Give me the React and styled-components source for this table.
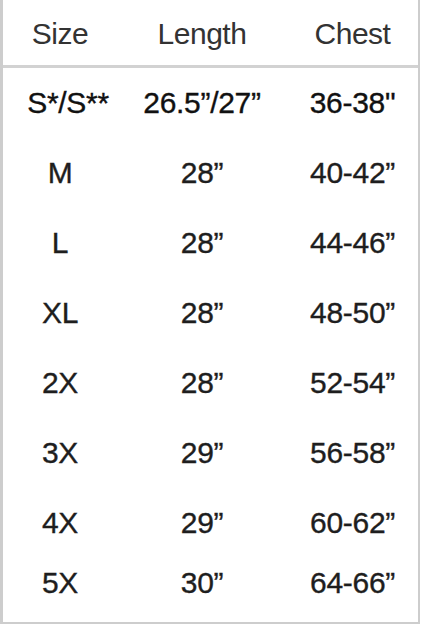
import React from "react";
import styled, { createGlobalStyle } from "styled-components";

const rows = [
  ["S*/S**", "26.5”/27”", "36-38\""],
  ["M", "28”", "40-42”"],
  ["L", "28”", "44-46”"],
  ["XL", "28”", "48-50”"],
  ["2X", "28”", "52-54”"],
  ["3X", "29”", "56-58”"],
  ["4X", "29”", "60-62”"],
  ["5X", "30”", "64-66”"],
];

const App = () => {
  return (
    <>
      <GlobalStyle />
      <Frame>
        <Header>
          <HeadCell>Size</HeadCell>
          <HeadCell>Length</HeadCell>
          <HeadCell>Chest</HeadCell>
        </Header>
        <Body>
          {rows.map((row, idx) => (
            <Row key={idx} $last={idx === rows.length - 1}>
              {row.map((cell, i) => (
                <Cell key={i} $first={idx === 0} $shift={idx === 0 && i === 0}>
                  {cell}
                </Cell>
              ))}
            </Row>
          ))}
        </Body>
      </Frame>
    </>
  );
};
export default App;

const GlobalStyle = createGlobalStyle`
  html, body {
    margin: 0;
    padding: 0;
    background: #ffffff;
  }
`;

const Frame = styled.div`
  width: 420px;
  height: 624px;
  box-sizing: border-box;
  border-left: 3px solid #cdcdcd;
  border-right: 2px solid #cdcdcd;
  border-bottom: 2px solid #cdcdcd;
  display: flex;
  flex-direction: column;
  font-family: "Liberation Sans", Arial, sans-serif;
`;

const Header = styled.div`
  display: grid;
  grid-template-columns: 114px 170px 1fr;
  height: 65px;
  border-bottom: 3px solid #d2d2d2;
  align-items: center;
`;

const HeadCell = styled.div`
  text-align: center;
  font-size: 30px;
  font-weight: 400;
  letter-spacing: -0.5px;
  color: #333333;
  padding-top: 3px;
`;

const Body = styled.div`
  display: flex;
  flex-direction: column;
`;

const Row = styled.div`
  display: grid;
  grid-template-columns: 114px 170px 1fr;
  height: ${(p) => (p.$last ? "50px" : "70px")};
  align-items: center;
`;

const Cell = styled.div`
  text-align: center;
  font-size: 30px;
  color: ${(p) => (p.$first ? "#111111" : "#1e1e1e")};
  -webkit-text-stroke: 0.35px currentColor;
  letter-spacing: -0.3px;
  padding-left: ${(p) => (p.$shift ? "16px" : "0")};
`;
